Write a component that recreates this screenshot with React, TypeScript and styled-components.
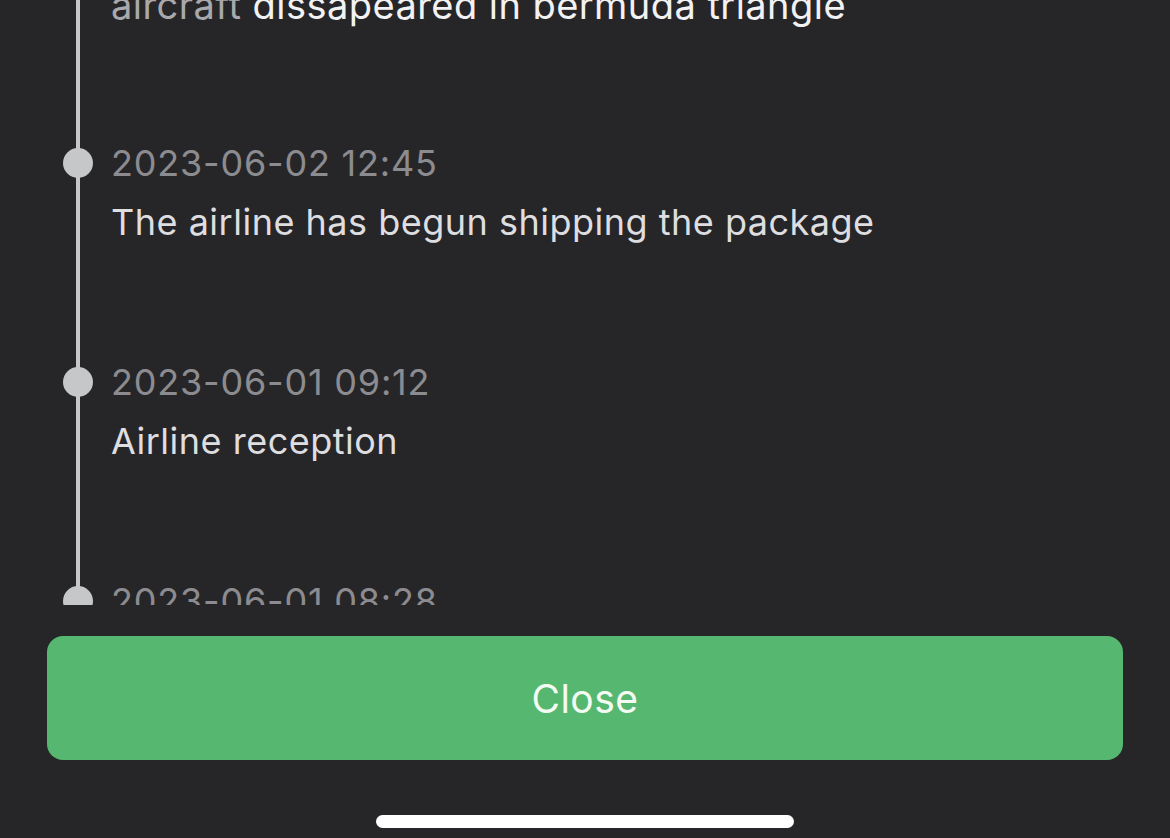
import React from "react";
import styled, { createGlobalStyle } from "styled-components";

const GlobalStyle = createGlobalStyle`
  html, body {
    margin: 0;
    padding: 0;
    background: #262628;
  }
  body {
    font-family: Inter, "Noto Sans", "Liberation Sans", sans-serif;
    -webkit-font-smoothing: antialiased;
  }
`;

const Screen = styled.div`
  width: 1170px;
  height: 838px;
  background: #262628;
  display: flex;
  flex-direction: column;
  overflow: hidden;
`;

const ScrollArea = styled.div`
  height: 605px;
  overflow: hidden;
  flex-shrink: 0;
`;

const List = styled.ul`
  list-style: none;
  margin: -85px 0 0 0;
  padding: 0 0 0 62px;
`;

const Item = styled.li`
  display: grid;
  grid-template-columns: 32px 1fr;
  column-gap: 17px;
  height: 219px;
`;

const Rail = styled.div`
  position: relative;
  display: flex;
  justify-content: center;
  &::before {
    content: "";
    position: absolute;
    top: 0;
    bottom: 0;
    left: 14px;
    width: 4px;
    background: #c6c7c9;
  }
`;

const Dot = styled.span`
  position: relative;
  margin-top: 14px;
  width: 30px;
  height: 30px;
  border-radius: 50%;
  background: #c6c7c9;
`;

const Content = styled.div`
  display: flex;
  flex-direction: column;
`;

const DateText = styled.div`
  font-size: 36px;
  line-height: 59px;
  color: #8c8c90;
  letter-spacing: 0.8px;
`;

const Desc = styled.div<{ $large?: boolean }>`
  font-size: ${(p) => (p.$large ? "38px" : "36px")};
  letter-spacing: ${(p) => (p.$large ? "0.45px" : "0.5px")};
  line-height: 59px;
  color: #dedee0;
  white-space: nowrap;
  margin-top: ${(p) => (p.$large ? "2px" : "0")};
`;

const Muted = styled.span`
  color: #a9a9ad;
`;

const Bright = styled.span`
  color: #f2f2f4;
`;

const Footer = styled.div`
  display: flex;
  flex-direction: column;
  align-items: center;
  padding: 31px 47px 0;
`;

const CloseButton = styled.button`
  width: 100%;
  height: 124px;
  border: none;
  border-radius: 16px;
  background: #56b870;
  color: #f3fbf3;
  font-family: Inter, "Noto Sans", "Liberation Sans", sans-serif;
  font-size: 39px;
  letter-spacing: 0.5px;
  cursor: pointer;
`;

const HomeIndicator = styled.div`
  margin-top: 55px;
  width: 418px;
  height: 13px;
  border-radius: 7px;
  background: #ffffff;
`;

type Entry = { date: string; desc: React.ReactNode; large?: boolean };

const entries: Entry[] = [
  {
    date: "2023-06-03 18:20",
    large: true,
    desc: (
      <>
        <Muted>aircraft</Muted> <Bright>dissapeared in bermuda triangle</Bright>
      </>
    ),
  },
  { date: "2023-06-02 12:45", desc: "The airline has begun shipping the package" },
  { date: "2023-06-01 09:12", desc: "Airline reception" },
  { date: "2023-06-01 08:28", desc: "Package received" },
];

export default function App() {
  return (
    <>
      <GlobalStyle />
      <Screen>
        <ScrollArea>
          <List>
            {entries.map((e, i) => (
              <Item key={i}>
                <Rail>
                  <Dot />
                </Rail>
                <Content>
                  <DateText>{e.date}</DateText>
                  <Desc $large={e.large}>{e.desc}</Desc>
                </Content>
              </Item>
            ))}
          </List>
        </ScrollArea>
        <Footer>
          <CloseButton>Close</CloseButton>
          <HomeIndicator />
        </Footer>
      </Screen>
    </>
  );
}
